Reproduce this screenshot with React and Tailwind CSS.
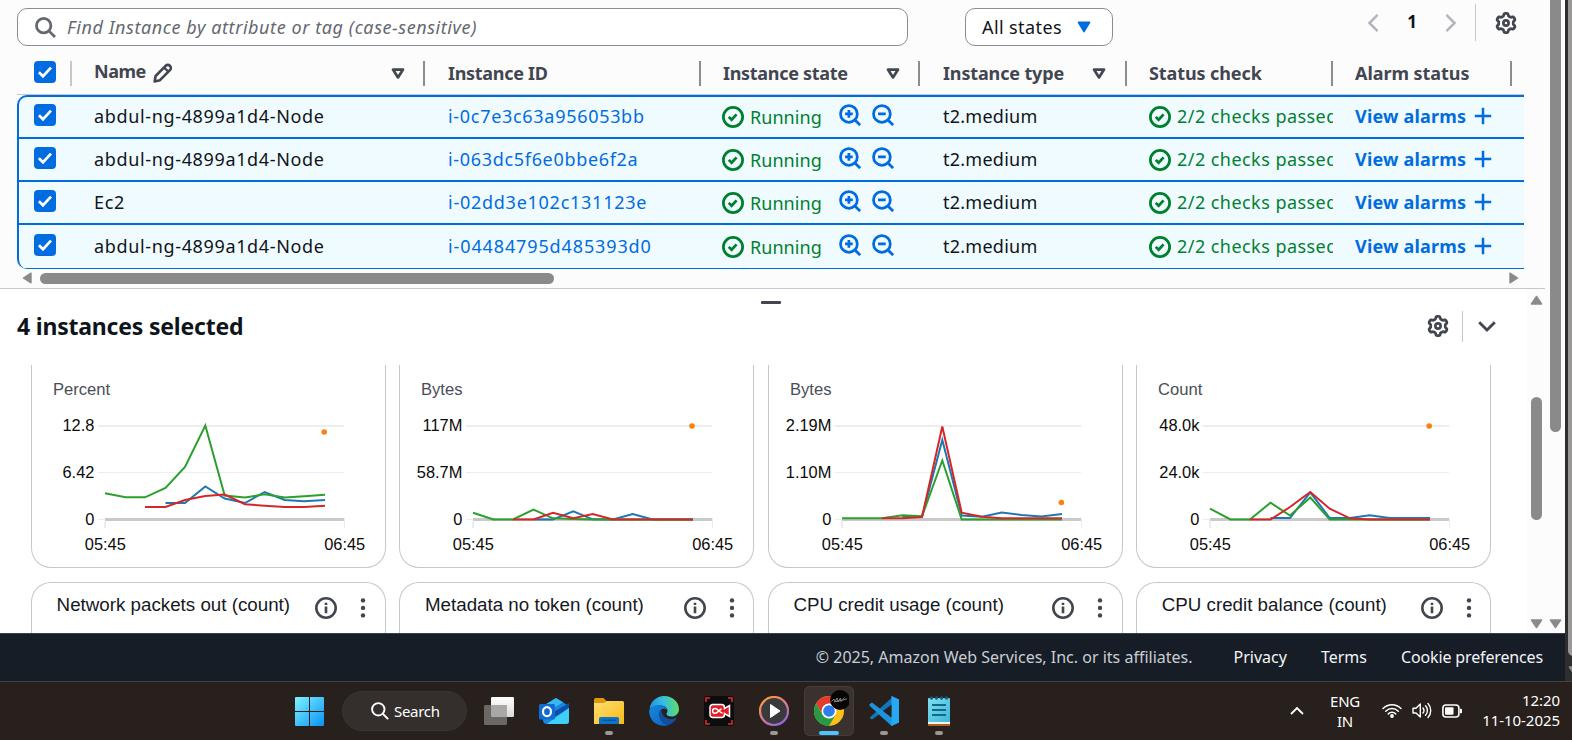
import React from "react";

const NOTO = "font-['Noto_Sans','Open_Sans',sans-serif]";

function Svg({ size = 22, w, h, box = "0 0 16 16", className = "", children }) {
  return (
    <svg width={w || size} height={h || size} viewBox={box} fill="none" className={"shrink-0 " + className}>
      {children}
    </svg>
  );
}

function Checkbox() {
  return (
    <span className="flex h-[22px] w-[22px] shrink-0 items-center justify-center rounded-[4px] bg-[#006ce0]">
      <Svg box="0 0 22 22">
        <path d="M4.9 11.2 9 15.2 17 6.6" stroke="#fff" strokeWidth="2.7" />
      </Svg>
    </span>
  );
}

function gearPath() {
  const pts = [];
  for (let i = 0; i < 144; i++) {
    const t = (i / 144) * Math.PI * 2;
    const r = 8.4 + 1.2 * Math.tanh(2.2 * Math.cos(6 * t)) + 0.05;
    pts.push((11 + r * Math.sin(t)).toFixed(2) + " " + (11 - r * Math.cos(t)).toFixed(2));
  }
  return "M" + pts.join("L") + "Z";
}
const GEAR = gearPath();

function Gear() {
  return (
    <Svg box="0 0 22 22">
      <path d={GEAR} stroke="#424650" strokeWidth="2.8" strokeLinejoin="round" />
      <circle cx="11" cy="11" r="2.6" stroke="#424650" strokeWidth="2.7" />
    </Svg>
  );
}

function StatusIcon() {
  return (
    <Svg>
      <circle cx="8" cy="8" r="7" stroke="#00802f" strokeWidth="2" />
      <path d="m4.9 7.9 2.1 2.1 3.6-3.9" stroke="#00802f" strokeWidth="2" />
    </Svg>
  );
}

function ZoomIcon({ plus }) {
  return (
    <Svg>
      <circle cx="7.2" cy="7.2" r="6.1" stroke="#006ce0" strokeWidth="2" />
      <path d="m11.4 11.4 4 4M4.4 7.2H10" stroke="#006ce0" strokeWidth="2" />
      {plus && <path d="M7.2 4.4V10" stroke="#006ce0" strokeWidth="2" />}
    </Svg>
  );
}

function SortIcon() {
  return (
    <Svg w={14} h={12} box="0 0 14 12">
      <path d="M2 1.6h10L7 9.4Z" stroke="#424650" strokeWidth="2.7" strokeLinejoin="round" />
    </Svg>
  );
}

function Pencil() {
  return (
    <Svg w={20} h={20} box="0 0 20 20">
      <path d="M1.6 18.4 2.6 13 12.6 2.8a2.9 2.9 0 0 1 4.3 0 2.9 2.9 0 0 1 0 4.3L7 17.2Z" stroke="#424650" strokeWidth="2.6" strokeLinejoin="round" />
      <path d="m11.2 4.6 4.2 4.2" stroke="#424650" strokeWidth="2.3" />
    </Svg>
  );
}

const COLS = "grid grid-cols-[55px_353px_276px_219px_207px_206px_179px_12px]";

function HeadCell({ label, pl, track, sort }) {
  return (
    <div className={"flex h-[25px] items-center border-r-2 border-[#8c8c94] " + pl}>
      <span className={"whitespace-nowrap pb-px text-[18px] leading-[24px] font-bold text-[#424650] " + track}>{label}</span>
      {sort && (
        <span className={"ml-auto " + sort}>
          <SortIcon />
        </span>
      )}
    </div>
  );
}

const ROWS = [
  { name: "abdul-ng-4899a1d4-Node", id: "i-0c7e3c63a956053bb", track: "tracking-[0.7px]", box: "h-[42px] border-b-2 pb-px" },
  { name: "abdul-ng-4899a1d4-Node", id: "i-063dc5f6e0bbe6f2a", track: "tracking-[0.68px]", box: "h-[43px] border-b-2" },
  { name: "Ec2", id: "i-02dd3e102c131123e", track: "tracking-[0.74px]", box: "h-[43px] border-b-2" },
  { name: "abdul-ng-4899a1d4-Node", id: "i-04484795d485393d0", track: "tracking-[0.88px]", box: "h-[44px] border-b" },
];

function Row({ r }) {
  return (
    <div className={COLS + " -ml-[2px] w-[1507px] border-[#006ce0] text-[18px] leading-[26px] whitespace-nowrap " + r.box}>
      <div className="flex items-center pb-[4px] pl-[17px]">
        <Checkbox />
      </div>
      <div className="flex items-center pb-[1px] pl-[22px] tracking-[0.65px] text-[#0f141a]">{r.name}</div>
      <div className={"flex items-center pb-[1px] pl-[23px] text-[#006ce0] " + r.track}>{r.id}</div>
      <div className="flex items-center pt-[1px] pl-[21px] text-[#00802f]">
        <StatusIcon />
        <span className="ml-[6px] tracking-[0.05px]">Running</span>
        <span className="ml-[17px] flex gap-[11px] pb-[4px]">
          <ZoomIcon plus />
          <ZoomIcon />
        </span>
      </div>
      <div className="flex items-center pb-[1px] pl-[23px] tracking-[0.25px] text-[#0f141a]">t2.medium</div>
      <div className="flex items-center overflow-hidden pl-[22px] text-[#00802f]">
        <StatusIcon />
        <span className="ml-[6px] pb-[1px] tracking-[0.45px]">2/2 checks passed</span>
      </div>
      <div className="flex items-center pb-[1px] pl-[22px] font-bold tracking-[0.18px] text-[#006ce0]">
        View alarms
        <Svg w={18} h={18} box="0 0 18 18" className="ml-[8px]">
          <path d="M9 .8v16.4M.8 9h16.4" stroke="#006ce0" strokeWidth="2.5" />
        </Svg>
      </div>
    </div>
  );
}

const XS = [74, 94.5, 114, 134.5, 154, 174.3, 193.7, 214, 233.7, 253.7, 273.3, 294];

const CHARTS = [
  {
    unit: "Percent", top: "12.8", mid: "6.42", dot: [293.2, 432],
    green: [493.3, 497.3, 497.3, 488, 467, 425.5, 495.5, 497.5, 494.3, 497.5, 496.2, 494.7],
    blue: [null, null, null, 503, 503, 486.5, 498.5, 503, 492, 500, 501.3, 500],
    red: [null, null, 507, 507, 500, 496, 494.5, 504.2, 505.7, 507, 507, 505.7],
  },
  {
    unit: "Bytes", top: "117M", mid: "58.7M", dot: [293, 426],
    green: [512.7, 519.5, 519.5, 509.7, 518.3, 519, 519.5, 519.5, 519.5, 519.5, 519.5, 519.5],
    blue: [null, null, null, 519.5, 519.5, 511.3, 519.3, 519.5, 514, 519.5, 519.5, 519.5],
    red: [null, null, 519.5, 519.5, 512.7, 518.3, 514, 519.5, 519.5, 519.5, 519.5, 519.5],
  },
  {
    unit: "Bytes", top: "2.19M", mid: "1.10M", dot: [293.4, 502.5],
    green: [518.3, 518.3, 518.3, 515.3, 516.3, 460.5, 519.5, 519.5, 519.5, 519.5, 519.5, 519.5],
    blue: [null, null, null, 516.8, 516.8, 440, 515.5, 516.8, 512.5, 515, 516.5, 514],
    red: [null, null, 518.3, 518.3, 517, 426.5, 512.7, 516.8, 518.3, 518.3, 518.3, 518.3],
  },
  {
    unit: "Count", top: "48.0k", mid: "24.0k", dot: [293.2, 426],
    green: [508.7, 519.5, 519.5, 502.7, 515.5, 497.5, 519.5, 519.5, 519.5, 519.5, 519.5, 519.5],
    blue: [null, null, null, 518, 518, 492.3, 518, 518, 515.3, 518, 518, 518],
    red: [null, null, 519.5, 519.5, 507, 492, 508.7, 518.3, 519.5, 519.5, 519.5, 519.5],
  },
];

function line(ys) {
  return ys.map((y, i) => (y === null ? null : XS[i] + "," + y)).filter(Boolean).join(" ");
}

function Chart({ c }) {
  return (
    <svg width="353" height="202" viewBox="1 365 353 202" className="block font-['Liberation_Sans',Arial,sans-serif] text-[16.4px]">
      <text x="22" y="395" fill="#4a4e57" fontSize="16.6">{c.unit}</text>
      <g fill="#0b0b0b">
        <text x="63.4" y="431.2" textAnchor="end">{c.top}</text>
        <text x="63.4" y="478" textAnchor="end">{c.mid}</text>
        <text x="63.4" y="525" textAnchor="end">0</text>
        <text x="74.3" y="550.2" textAnchor="middle">05:45</text>
        <text x="313.7" y="550.2" textAnchor="middle">06:45</text>
      </g>
      <g fill="#ededed">
        <rect x="67" y="425" width="246" height="2" />
        <rect x="67" y="472" width="246" height="1" />
        <rect x="67" y="519" width="7" height="1" />
        <rect x="73" y="521" width="2" height="7" />
        <rect x="313" y="518" width="1" height="10" />
      </g>
      <rect x="74" y="518" width="239" height="3" fill="#c9c9c9" />
      <g strokeWidth="2" fill="none">
        <polyline points={line(c.blue)} stroke="#1f77b4" />
        <polyline points={line(c.green)} stroke="#2ca02c" />
        <polyline points={line(c.red)} stroke="#d62728" />
      </g>
      <circle cx={c.dot[0]} cy={c.dot[1]} r="2.8" fill="#ff7f0e" />
    </svg>
  );
}

const TITLES = ["Network packets out (count)", "Metadata no token (count)", "CPU credit usage (count)", "CPU credit balance (count)"];

function Arrow({ d, w = 13, h = 10 }) {
  return (
    <Svg w={w} h={h} box={"0 0 " + w + " " + h}>
      <path d={d} fill="#8a8a8a" stroke="#8a8a8a" strokeWidth="1.4" strokeLinejoin="round" />
    </Svg>
  );
}
const UP = "M1.4 9 6.5 1.4 11.6 9Z";
const DOWN = "M1.4 1 6.5 8.6 11.6 1Z";

function InstanceTable() {
  return (
    <section className="h-[289px] w-[1545px] border-b border-[#c6c6cd] bg-[#fcfcfd] pl-[17px]">
      <div className="flex h-[61px] items-start">
        <div className="mt-[8px] flex h-[38px] w-[891px] items-center rounded-[10px] border border-[#8c8c94] bg-white pl-[17px]">
          <Svg size={21}>
            <circle cx="6.6" cy="6.6" r="5.5" stroke="#656871" strokeWidth="2.1" />
            <path d="m10.4 10.4 4.8 4.8" stroke="#656871" strokeWidth="2.1" />
          </Svg>
          <span className="ml-[11px] text-[18px] leading-[26px] tracking-[0.58px] whitespace-nowrap text-[#656871] italic">
            Find Instance by attribute or tag (case-sensitive)
          </span>
        </div>
        <div className="mt-[8px] ml-[57px] flex h-[38px] w-[148px] items-center rounded-[10px] border border-[#8c8c94] bg-white pb-[1px] pl-[16px]">
          <span className="w-[95px] text-[18px] leading-[26px] tracking-[0.4px] whitespace-nowrap text-[#0f141a]">All states</span>
          <Svg w={14} h={12} box="0 0 14 12" className="mt-[1px]">
            <path d="M1.4 1.4h11.2L7 10.6Z" fill="#006ce0" stroke="#006ce0" strokeWidth="1.6" strokeLinejoin="round" />
          </Svg>
        </div>
        <div className="mt-[4px] ml-[254px] flex h-[37px] items-center">
          <Svg w={12} h={20} box="0 0 12 20">
            <path d="M10.6 1.8 2.4 10l8.2 8.2" stroke="#b4b4bb" strokeWidth="2.5" />
          </Svg>
          <span className="w-[66px] pb-[2px] text-center text-[17px] font-bold text-[#0f141a]">1</span>
          <Svg w={12} h={20} box="0 0 12 20">
            <path d="m1.4 1.8 8.2 8.2-8.2 8.2" stroke="#b4b4bb" strokeWidth="2.5" />
          </Svg>
          <span className="ml-[18px] h-[37px] w-px bg-[#c6c6cd]" />
          <span className="ml-[19px]">
            <Gear />
          </span>
        </div>
      </div>

      <div className="w-[1507px]">
        <div className={COLS + " h-[34px] border-b border-[#c6c6cd]"}>
          <div className="h-[25px] border-r-2 border-[#c6c6cd] pl-[17px]">
            <Checkbox />
          </div>
          <div className="flex h-[25px] items-center border-r-2 border-[#8c8c94] pl-[22px]">
            <span className="pb-[5px] text-[18px] leading-[22px] font-bold tracking-[-0.5px] text-[#424650]">Name</span>
            <span className="ml-[7px] pb-px">
              <Pencil />
            </span>
            <span className="mr-[18px] ml-auto">
              <SortIcon />
            </span>
          </div>
          <HeadCell label="Instance ID" pl="pl-[23px]" track="tracking-[-0.3px]" />
          <HeadCell label="Instance state" pl="pl-[22px]" track="tracking-[-0.3px]" sort="mr-[18px]" />
          <HeadCell label="Instance type" pl="pl-[23px]" track="tracking-[-0.15px]" sort="mr-[19px]" />
          <HeadCell label="Status check" pl="pl-[22px]" track="tracking-[-0.1px]" />
          <HeadCell label="Alarm status" pl="pl-[22px]" track="tracking-[-0.05px]" />
        </div>
        <div className="overflow-hidden rounded-l-[10px] border-t-2 border-l-2 border-[#006ce0] bg-[#f0fbff]">
          {ROWS.map((r, i) => (
            <Row key={i} r={r} />
          ))}
        </div>
      </div>
      <div className="mt-[3px] flex h-[12px] w-[1507px] items-center pl-[5px]">
        <Arrow w={10} h={12} d="M9 1.2v9.6L1.4 6Z" />
        <span className="ml-[8px] h-[11px] w-[514px] rounded-full bg-[#8a8a8a]" />
        <span className="ml-auto pr-[5px]">
          <Arrow w={10} h={12} d="M1 1.2v9.6L8.6 6Z" />
        </span>
      </div>
    </section>
  );
}

function DetailPanel() {
  return (
    <section className="flex h-[344px] w-[1545px] bg-white">
      <div className="w-[1527px]">
        <div className="flex h-[22px] justify-center pt-[11.5px] pl-[15px]">
          <span className="h-[3px] w-[20px] rounded-[1px] bg-[#424650]" />
        </div>
        <div className="flex h-[54px] items-start pl-[17px]">
          <h2 className="w-[1410px] text-[23px] leading-[30px] font-bold tracking-[-0.2px] text-[#0f141a]">4 instances selected</h2>
          <span className="mt-[4px]">
            <Gear />
          </span>
          <span className="ml-[13px] h-[31px] w-px bg-[#c6c6cd]" />
          <Svg w={18} h={11} box="0 0 18 11" className="mt-[10px] ml-[15px]">
            <path d="m1.2 1.2 7.8 7.8 7.8-7.8" stroke="#424650" strokeWidth="2.8" />
          </Svg>
        </div>
        <div className="grid h-[268px] grid-cols-[repeat(4,355px)] grid-rows-[203px_51px] gap-x-[13.4px] gap-y-[14px] overflow-hidden pl-[31px]">
          {CHARTS.map((c, i) => (
            <div key={i} className="overflow-hidden rounded-b-[20px] border border-t-0 border-[#c6c6cd]">
              <Chart c={c} />
            </div>
          ))}
          {TITLES.map((t) => (
            <div key={t} className="flex rounded-t-[20px] border border-b-0 border-[#c6c6cd] pt-[11px] pl-[24.600px]">
              <span className="w-[258.800px] font-['Liberation_Sans',Arial,sans-serif] text-[18.75px] leading-[22px] whitespace-nowrap text-[#16191f]">{t}</span>
              <Svg className="mt-[3px]">
                <circle cx="8" cy="8" r="7.05" stroke="#424650" strokeWidth="1.9" />
                <path d="M8 6.9v4.9M8 4.1v1.8" stroke="#424650" strokeWidth="1.9" />
              </Svg>
              <Svg w={6} h={20} box="0 0 6 20" className="mt-[3.500px] ml-[23px]">
                <g fill="#424650">
                  <circle cx="3" cy="2.4" r="2.2" />
                  <circle cx="3" cy="9.9" r="2.2" />
                  <circle cx="3" cy="17.4" r="2.2" />
                </g>
              </Svg>
            </div>
          ))}
        </div>
      </div>
      <div className="flex w-[18px] flex-col items-center bg-[#fcfcfc]">
        <span className="mt-[6px]">
          <Arrow d={UP} />
        </span>
        <span className="mt-[92px] h-[123px] w-[11px] rounded-full bg-[#8a8a8a]" />
        <span className="mt-[99px]">
          <Arrow d={DOWN} />
        </span>
      </div>
    </section>
  );
}

function Footer() {
  return (
    <footer className="flex h-[48px] w-[1565px] items-center justify-end border-t border-[#3a3f48] bg-[#161d26] pr-[22px] pb-[2px] text-[16px] whitespace-nowrap text-[#f4f4f6]">
      <span className="text-[#c9cdd3]">© 2025, Amazon Web Services, Inc. or its affiliates.</span>
      <span className="ml-[41px]">Privacy</span>
      <span className="ml-[34px]">Terms</span>
      <span className="ml-[34px] tracking-[-0.14px]">Cookie preferences</span>
    </footer>
  );
}

function AppIcon({ children }) {
  return (
    <svg width="30" height="30" viewBox="0 0 30 30" fill="none">
      {children}
    </svg>
  );
}

function Slot({ mark, active, children }) {
  return (
    <div className="flex w-[55px] flex-col items-center pt-[4px]">
      <div className={"flex h-[50px] w-[50px] flex-col items-center rounded-[6px] pt-[10px] " + (active ? "bg-[#39322e] ring-1 ring-[#443d39] ring-inset" : "")}>
        {children}
        {mark && <span className={"mt-[5px] h-[4px] rounded-full " + (active ? "w-[20px] bg-[#4cc2ff]" : "w-[8px] bg-[#9b9794]")} />}
      </div>
    </div>
  );
}

function Taskbar() {
  return (
    <div className="flex h-[59px] w-[1572px] border-t border-[#46423f] bg-[#27201c] text-white">
      <svg width="29" height="29" viewBox="0 0 29 29" className="mt-[15px] ml-[295px]">
        <defs>
          <linearGradient id="win" x1="0" y1="0" x2="1" y2="1">
            <stop offset="0" stopColor="#7df3ff" />
            <stop offset="1" stopColor="#0a91f5" />
          </linearGradient>
        </defs>
        <path d="M1 0h13v14H0V1a1 1 0 0 1 1-1ZM15 0h13a1 1 0 0 1 1 1v13H15ZM0 15h14v14H1a1 1 0 0 1-1-1ZM15 15h14v13a1 1 0 0 1-1 1H15Z" fill="url(#win)" />
      </svg>
      <div className="mt-[9px] ml-[18px] flex h-[40px] w-[125px] items-center rounded-full border border-[#3a3532] bg-[#342f2c] pl-[28px]">
        <Svg w={18} h={18} box="0 0 18 18">
          <circle cx="7.3" cy="7.3" r="6.2" stroke="#fff" strokeWidth="1.9" />
          <path d="m11.8 11.8 5.3 5.3" stroke="#fff" strokeWidth="2" />
        </Svg>
        <span className="ml-[5px] pb-px text-[15px] leading-[20px] tracking-[-0.3px]">Search</span>
      </div>
      <div className="ml-[4.5px] flex">
        <Slot>
          <AppIcon>
            <defs>
              <linearGradient id="tv" x1="0" y1="0" x2="0" y2="1">
                <stop offset="0" stopColor="#fff" />
                <stop offset="1" stopColor="#d9d9d9" />
              </linearGradient>
            </defs>
            <rect x="7" y="1" width="23" height="20" rx="1.2" fill="url(#tv)" />
            <rect x="0" y="9" width="23" height="20" rx="1.2" fill="#6a6764" />
            <path d="M7 9h16v12H8.200a1.200 1.200 0 0 1-1.200-1.200Z" fill="#aaa8a6" />
          </AppIcon>
        </Slot>
        <Slot>
          <AppIcon>
            <path d="M4 10 17 2l13 8v15a3 3 0 0 1-3 3H8a4 4 0 0 1-4-4Z" fill="#1b86dd" />
            <path d="M4 10 17 2l7 4.300L10 15Z" fill="#35b8f1" />
            <path d="m13 17 17-10v5L16 21Z" fill="#0c4fa8" />
            <path d="M17 21 30 12v13a3 3 0 0 1-3 3H8l9-7Z" fill="#3fd0f8" />
            <rect x="0" y="8" width="16" height="15.500" rx="1.500" fill="#0f6cd0" />
            <ellipse cx="8" cy="15.700" rx="4" ry="4.500" stroke="#fff" strokeWidth="2.200" />
          </AppIcon>
        </Slot>
        <Slot mark>
          <AppIcon>
            <defs>
              <linearGradient id="fo" x1="0" y1="0" x2="1" y2="1">
                <stop offset="0" stopColor="#ffdf73" />
                <stop offset="1" stopColor="#f9b916" />
              </linearGradient>
            </defs>
            <path d="M0 3.500A1.500 1.500 0 0 1 1.500 2H9.500l3.500 3.500V12H0Z" fill="#dc9a08" />
            <path d="M0 7h10l3-2h15.500A1.500 1.500 0 0 1 30 6.500V28H0Z" fill="url(#fo)" />
            <path d="M5 28v-5.500A1.500 1.500 0 0 1 6.500 21h17a1.500 1.500 0 0 1 1.500 1.500V28Z" fill="#0d74cb" />
            <path d="M8.500 24.300h13" stroke="#0a4f94" strokeWidth="1.300" />
          </AppIcon>
        </Slot>
        <Slot>
          <AppIcon>
            <defs>
              <linearGradient id="e1" x1="0" y1="0.500" x2="1" y2="0.400">
                <stop offset="0" stopColor="#2393e0" />
                <stop offset="0.500" stopColor="#36bfe0" />
                <stop offset="1" stopColor="#62de5c" />
              </linearGradient>
              <linearGradient id="e2" x1="0" y1="0" x2="1" y2="1">
                <stop offset="0" stopColor="#1689dc" />
                <stop offset="1" stopColor="#0c62c0" />
              </linearGradient>
            </defs>
            <path d="M.5 13C1.500 5.500 7.500 0 15 0c8.500 0 15 6 15 13.200 0 4.600-3.500 7.300-7.500 7.300-3.200 0-5-1.200-5-2.400 0-.9 1-1.300 1-3.300 0-2.800-2.800-5.300-6.800-5.300C6 9.500 1.500 12 .5 13Z" fill="url(#e1)" />
            <path d="M.2 14.500c1-3.300 5.800-6 10.500-5.500 4.300.4 7 3 7.600 5.500-1-1.400-2.500-2-4-1.800-2.300.4-4 2.500-4 5.300 0 5.500 5 11 9.300 11-9 3.200-19.900-3-19.400-14.500Z" fill="url(#e2)" />
            <path d="M12.500 14c-1.300.9-2.300 2.300-2.300 4.500 0 5.200 4.200 10.300 9.300 10.500 3.500-1.200 6.200-3.400 8-6.300.3-.6-.1-.9-.7-.6-6.300 3-14.300-.6-14.300-8.100Z" fill="#0f4f9e" />
          </AppIcon>
        </Slot>
        <Slot>
          <AppIcon>
            <rect width="30" height="30" rx="3" fill="#0c0d0f" />
            <path d="M2 6V2h4M24 2h4v4M28 24v4h-4M6 28H2v-4" stroke="#e5252b" strokeWidth="1.600" />
            <path d="M8.500 8.500h9a3 3 0 0 1 3 3v1l5-3v11l-5-3v1a3 3 0 0 1-3 3h-9a3 3 0 0 1-2.500-3v-7a3 3 0 0 1 2.500-3Z" fill="#e11d2a" stroke="#fff" strokeWidth="1.500" />
            <path d="M18.500 17c-3 0-4.500-4.500-7.500-4.500a2.400 2.400 0 0 0 0 4.800c3 0 3.500-3.300 6.500-4.300" stroke="#fff" strokeWidth="1.400" />
          </AppIcon>
        </Slot>
        <Slot mark>
          <AppIcon>
            <defs>
              <linearGradient id="mp" x1="0.200" y1="0" x2="0.800" y2="1">
                <stop offset="0" stopColor="#ff9a3d" />
                <stop offset="0.500" stopColor="#d97a8c" />
                <stop offset="1" stopColor="#8b63e0" />
              </linearGradient>
            </defs>
            <circle cx="15" cy="15" r="14" fill="#3a3a3c" stroke="url(#mp)" strokeWidth="2.200" />
            <path d="M11.500 8.500 21 15l-9.500 6.500Z" fill="#fff" stroke="#fff" strokeLinejoin="round" />
          </AppIcon>
        </Slot>
        <Slot mark active>
          <svg width="40" height="36" viewBox="-5 -6 40 36" fill="none" className="-mt-[6px]">
            <circle cx="15" cy="15" r="15" fill="#fbc116" />
            <path d="M15 7.500H28A15 15 0 0 0 2 7.500l6.500 11.250Z" fill="#e33b2e" />
            <path d="M2 7.500A15 15 0 0 0 15 30l6.500-11.250L15 22.500l-6.500-3.750Z" fill="#269a47" />
            <circle cx="15" cy="15" r="7.500" fill="#fff" />
            <circle cx="15" cy="15" r="5.800" fill="#2b7de9" />
            <circle cx="26" cy="4" r="9.900" fill="#060606" />
            <path d="m17.500 5.500 2.500-2.500 1 3 2-4 1 4 2.500-4 .5 3.500 3.500-4M20 6l13-3" stroke="#8a8a8a" strokeWidth=".9" />
          </svg>
        </Slot>
        <Slot mark>
          <AppIcon>
            <path d="M22.500 0 30 3.500v23L22.500 30 10 18.500 3 23.500 .5 21.800 22.500 2Z" fill="#1277bd" />
            <path d="m.5 8.200 2.500-1.700 20 15.500V30L.5 9.800Z" fill="#1c93dc" />
            <path d="M22.500 0 30 3.500v23L22.500 30Z" fill="#29a8f2" />
            <path d="M22.500 8.500v13L14 15Z" fill="#27201c" />
            <path d="m0 11.500 4.300 3.500L0 18.500Z" fill="#27201c" />
          </AppIcon>
        </Slot>
        <Slot mark>
          <AppIcon>
            <defs>
              <linearGradient id="np" x1="0" y1="0" x2="1" y2="1">
                <stop offset="0" stopColor="#7fe0f2" />
                <stop offset="1" stopColor="#3fb4d8" />
              </linearGradient>
            </defs>
            <path d="M4 26h22v4H5a1 1 0 0 1-1-1Z" fill="#b4601c" />
            <path d="M4 25h22v3H4Z" fill="#f2f2f2" />
            <rect x="4" y="2" width="22" height="24" rx="1" fill="url(#np)" />
            <path d="M8 9h14M8 14h14M8 19h14" stroke="#126a86" strokeWidth="1.800" />
            <g fill="#145c72">
              <circle cx="7.500" cy="2" r="1.700" />
              <circle cx="12.500" cy="2" r="1.700" />
              <circle cx="17.500" cy="2" r="1.700" />
              <circle cx="22.500" cy="2" r="1.700" />
            </g>
          </AppIcon>
        </Slot>
      </div>
      <div className="ml-auto flex items-start pr-[12px] text-[15px] leading-[20px]">
        <Svg w={14} h={9} box="0 0 14 9" className="mt-[24px]">
          <path d="M1 8 7 2l6 6" stroke="#fff" strokeWidth="1.900" />
        </Svg>
        <div className="mt-[8.500px] ml-[20px] w-[42px] text-center tracking-[-0.3px]">
          ENG
          <br />
          IN
        </div>
        <Svg w={20} h={15} box="0 0 20 15" className="mt-[21px] ml-[16px]">
          <g stroke="#fff" strokeWidth="1.500" strokeLinecap="round">
            <path d="M1 5.500a12.700 12.700 0 0 1 18 0" />
            <path d="M3.700 8.200a8.900 8.900 0 0 1 12.600 0" />
            <path d="M6.300 10.900a5.200 5.200 0 0 1 7.400 0" />
          </g>
          <circle cx="10" cy="13" r="1.900" fill="#fff" />
        </Svg>
        <Svg w={20} h={17} box="0 0 20 17" className="mt-[20px] ml-[10px]">
          <g stroke="#fff" strokeWidth="1.400" strokeLinecap="round" strokeLinejoin="round">
            <path d="M1 6.200h3L8.300 2v13L4 11H1Z" />
            <path d="M11 6a4 4 0 0 1 0 5M13.500 3.700a7 7 0 0 1 0 9.600M16 1.500a10.300 10.300 0 0 1 0 14" />
          </g>
        </Svg>
        <Svg w={20} h={14} box="0 0 20 14" className="mt-[21.500px] ml-[10px]">
          <rect x=".9" y="1" width="16" height="12" rx="3" stroke="#fff" strokeWidth="1.600" />
          <rect x="3" y="3.200" width="8.500" height="7.600" rx="1" fill="#fff" />
          <path d="M18 4.800h1a1 1 0 0 1 1 1v2.400a1 1 0 0 1-1 1h-1Z" fill="#fff" />
        </Svg>
        <div className="mt-[8px] ml-[20px] w-[78px] text-right tracking-[-0.05px] whitespace-nowrap">
          12:20
          <br />
          11-10-2025
        </div>
      </div>
    </div>
  );
}

export default function App() {
  return (
    <div className={"h-[740px] w-[1572px] overflow-hidden bg-[#fcfcfc] " + NOTO}>
      <div className="flex h-[681px]">
        <div className="w-[1565px] shrink-0">
          <div className="flex h-[633px]">
            <div className="w-[1545px] shrink-0">
              <InstanceTable />
              <DetailPanel />
            </div>
            <div className="flex w-[20px] flex-col items-center">
              <span className="h-[432px] w-[11px] rounded-b-full bg-[#8a8a8a]" />
              <span className="mt-[187px]">
                <Arrow d={DOWN} />
              </span>
            </div>
          </div>
          <Footer />
        </div>
        <div className="w-[7px] overflow-hidden bg-[#2e2e2e] pl-[3px]">
          <div className="h-[656px] w-[11px] rounded-b-full bg-[#9a9896]" />
          <div className="mt-[10px] flex w-[13px]">
            <Arrow d={DOWN} />
          </div>
        </div>
      </div>
      <Taskbar />
    </div>
  );
}
